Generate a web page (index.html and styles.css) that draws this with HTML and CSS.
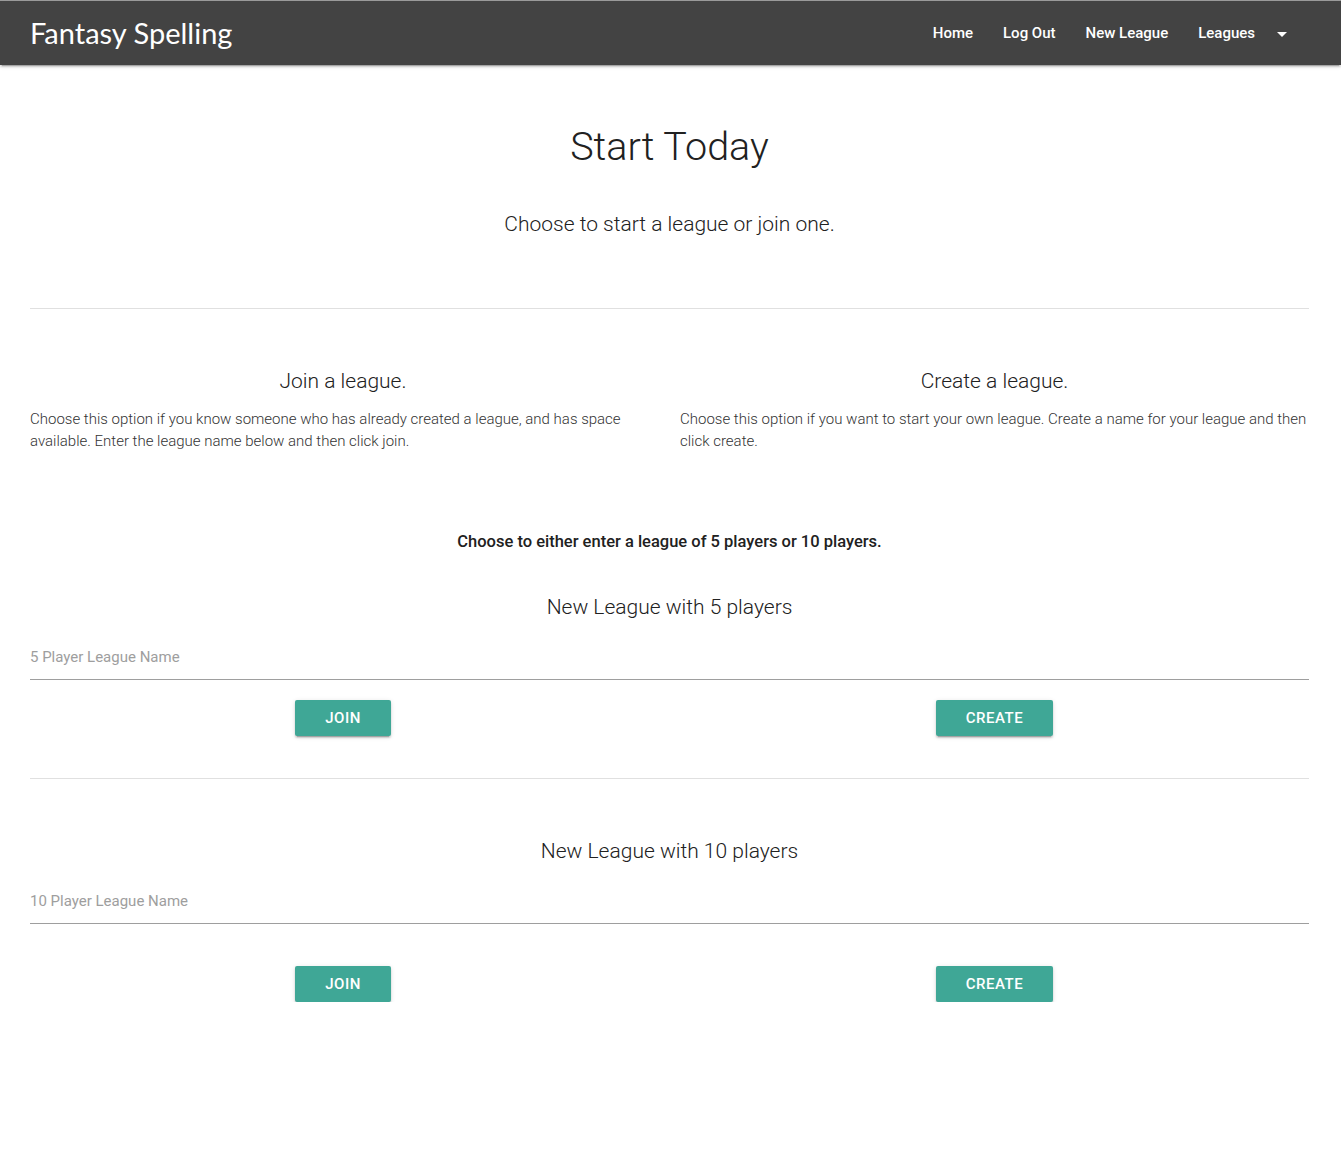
FILE: index.html
```html
<!DOCTYPE html>
<html lang="en">
<head>
<meta charset="utf-8">
<title>Fantasy Spelling</title>
<link rel="stylesheet" href="styles.css">
</head>
<body>
<nav class="navbar">
  <div class="nav-inner">
    <a class="brand" href="#">Fantasy Spelling</a>
    <ul class="nav-links">
      <li><a href="#">Home</a></li>
      <li><a href="#">Log Out</a></li>
      <li><a href="#">New League</a></li>
      <li><a href="#" class="dropdown">Leagues<svg class="caret" width="24" height="24" viewBox="0 0 24 24"><path d="M7 10l5 5 5-5z" fill="#fff"/></svg></a></li>
    </ul>
  </div>
</nav>

<main class="container">
  <h1 class="title">Start Today</h1>
  <p class="lead">Choose to start a league or join one.</p>
  <hr class="divider first">

  <div class="cols">
    <div class="col">
      <h2 class="col-title">Join a league.</h2>
      <p class="col-text">Choose this option if you know someone who has already created a league, and has space available. Enter the league name below and then click join.</p>
    </div>
    <div class="col">
      <h2 class="col-title">Create a league.</h2>
      <p class="col-text">Choose this option if you want to start your own league. Create a name for your league and then click create.</p>
    </div>
  </div>

  <p class="choose">Choose to either enter a league of 5 players or 10 players.</p>

  <h3 class="league-title">New League with 5 players</h3>
  <input class="league-input" type="text" placeholder="5 Player League Name">
  <div class="btn-row">
    <div class="btn-cell"><button class="btn">Join</button></div>
    <div class="btn-cell"><button class="btn">Create</button></div>
  </div>

  <hr class="divider second">

  <h3 class="league-title">New League with 10 players</h3>
  <input class="league-input" type="text" placeholder="10 Player League Name">
  <div class="btn-row lower">
    <div class="btn-cell"><button class="btn">Join</button></div>
    <div class="btn-cell"><button class="btn">Create</button></div>
  </div>
</main>
</body>
</html>
```

FILE: styles.css
```css
* { box-sizing: border-box; }

html, body {
  margin: 0;
  padding: 0;
  background: #fff;
}

body {
  font-family: Roboto, "Liberation Sans", sans-serif;
  color: #212121;
}

.navbar {
  height: 65px;
  background: #434343;
  border-top: 1px solid #9a9a9a;
  box-shadow: 0 2px 2px 0 rgba(0,0,0,0.14), 0 1px 5px 0 rgba(0,0,0,0.12), 0 3px 1px -2px rgba(0,0,0,0.2);
  position: relative;
  z-index: 2;
}

.nav-inner {
  padding: 0 32px 0 30px;
  height: 64px;
  display: flex;
  align-items: center;
  justify-content: space-between;
}

.brand {
  font-family: Lato, "Open Sans", sans-serif;
  font-size: 29px;
  color: #fff;
  text-decoration: none;
  margin-top: -2px;
}

.nav-links {
  list-style: none;
  margin: 0;
  padding: 0;
  display: flex;
  height: 64px;
}

.nav-links a {
  display: flex;
  align-items: center;
  height: 64px;
  padding: 0 15px;
  color: #fff;
  text-decoration: none;
  font-size: 15px;
  font-weight: 500;
}

.caret {
  margin-left: 15px;
  margin-top: 1px;
}

.container {
  padding: 0 32px 0 30px;
}

.title {
  font-size: 39.5px;
  font-weight: 300;
  line-height: 46px;
  text-align: center;
  margin: 59px 0 0;
  color: #212121;
}

.lead {
  font-size: 21px;
  font-weight: 300;
  line-height: 30px;
  text-align: center;
  margin: 39px 0 0;
  color: #212121;
}

.divider {
  border: 0;
  border-top: 1px solid #e0e0e0;
  margin: 0;
}

.divider.first { margin-top: 69px; }
.divider.second { margin-top: 42px; }

.cols {
  display: grid;
  grid-template-columns: 626px 1fr;
  column-gap: 24px;
  margin-top: 57px;
}

.col-title {
  font-size: 21px;
  font-weight: 300;
  line-height: 30px;
  text-align: center;
  margin: 0;
  color: #212121;
}

.col-text {
  font-size: 15px;
  font-weight: 300;
  line-height: 22px;
  margin: 12px 0 0;
  color: #333;
}

.choose {
  font-size: 16.5px;
  font-weight: 500;
  line-height: 24px;
  text-align: center;
  margin: 78px 0 0;
  color: #212121;
}

.league-title {
  font-size: 21px;
  font-weight: 300;
  line-height: 30px;
  text-align: center;
  margin: 38px 0 0;
  color: #212121;
}

.divider.second + .league-title { margin-top: 57px; }

.league-input {
  display: block;
  width: 100%;
  height: 46px;
  margin: 12px 0 0;
  padding: 0;
  border: 0;
  border-bottom: 1px solid #9e9e9e;
  font-family: Roboto, "Liberation Sans", sans-serif;
  font-size: 15px;
  color: #212121;
  background: transparent;
  outline: none;
}

.league-input::placeholder {
  color: #9e9e9e;
}

.btn-row {
  display: grid;
  grid-template-columns: 626px 1fr;
  column-gap: 24px;
  margin-top: 20px;
}

.btn-row.lower { margin-top: 42px; }

.btn-cell {
  display: flex;
  justify-content: center;
}

.btn {
  height: 36px;
  padding: 0 30px;
  border: 0;
  border-radius: 2px;
  background: #3fa796;
  color: #fff;
  font-family: Roboto, "Liberation Sans", sans-serif;
  font-size: 15px;
  font-weight: 500;
  letter-spacing: 0.5px;
  text-transform: uppercase;
  box-shadow: 0 2px 2px 0 rgba(0,0,0,0.14), 0 1px 5px 0 rgba(0,0,0,0.12), 0 3px 1px -2px rgba(0,0,0,0.2);
  cursor: pointer;
}
```
